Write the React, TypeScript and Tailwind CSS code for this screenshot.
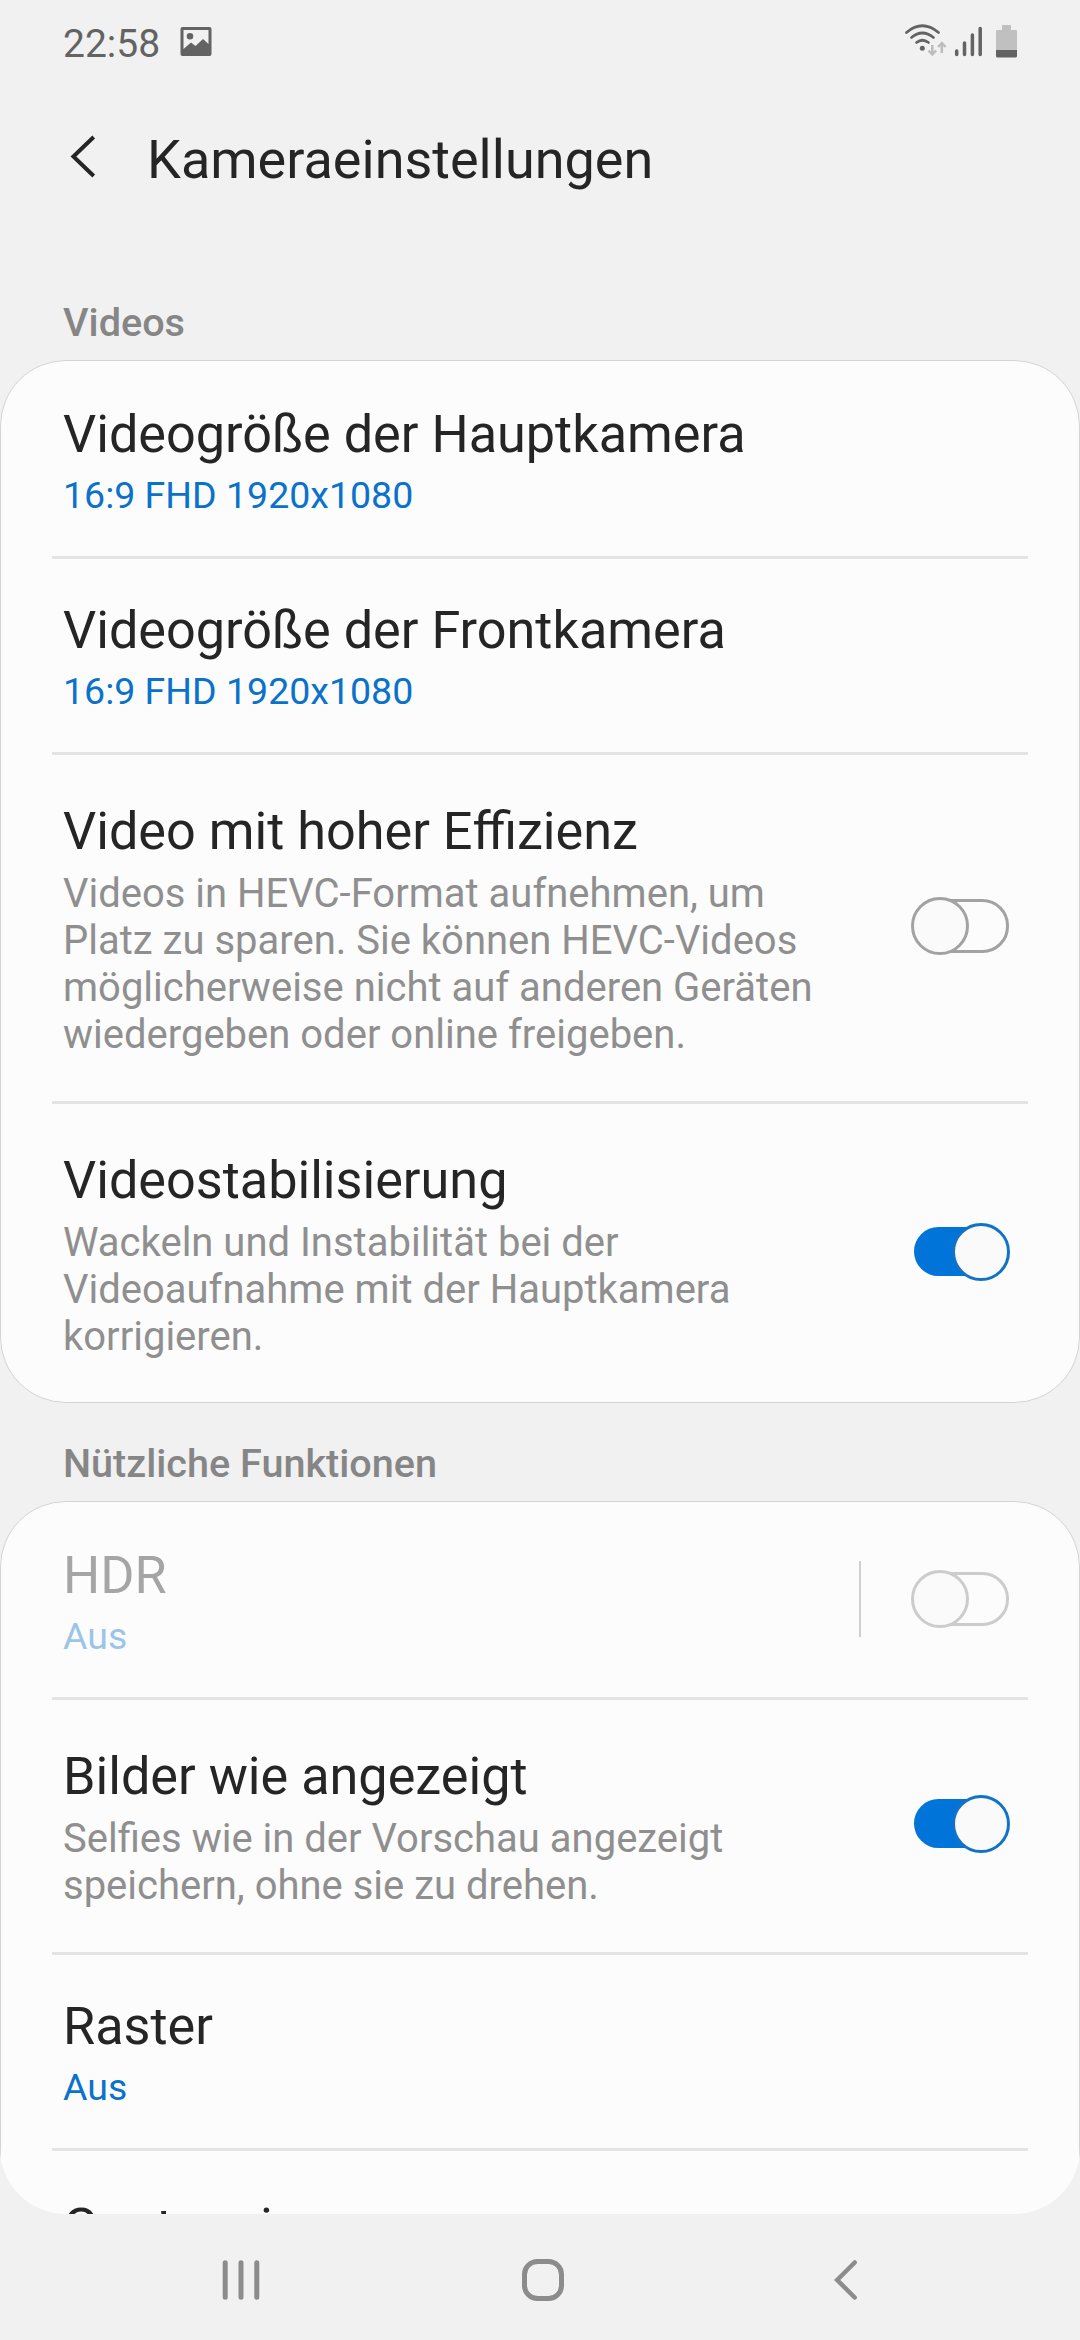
import type { ReactNode } from 'react';

function Toggle({ on = false, dim = false }: { on?: boolean; dim?: boolean }) {
  if (on) {
    return (
      <svg width="100" height="58" viewBox="0 0 100 58" className="shrink-0">
        <rect x="3" y="4" width="90" height="49" rx="24.5" fill="#0074d8" />
        <circle cx="70" cy="29" r="27.5" fill="#fafafa" stroke="#1273c6" strokeWidth="3" />
      </svg>
    );
  }
  const color = dim ? '#cccccc' : '#a2a2a2';
  return (
    <svg width="100" height="58" viewBox="0 0 100 58" className="shrink-0">
      <rect x="12" y="3.5" width="84.5" height="51" rx="25" fill="none" stroke={color} strokeWidth="3" />
      <circle cx="29" cy="29" r="27.5" fill="#fafafa" stroke={color} strokeWidth="3" />
    </svg>
  );
}

type RowProps = {
  title: string;
  value?: string;
  lines?: string[];
  height: string;
  pad: string;
  dim?: boolean;
  last?: boolean;
  controlTop?: string;
  children?: ReactNode;
};

function Row({ title, value, lines, height, pad, dim, last, controlTop = '', children }: RowProps) {
  return (
    <div className={`mx-[52px] flex shrink-0 items-start ${height} ${last ? '' : 'border-b-[3px] border-[#e4e4e4]'}`}>
      <div className={`grow pl-[11px] ${pad} ${dim ? 'opacity-40' : ''}`}>
        <div className="mb-2 h-[61px] whitespace-nowrap text-[52.2px] leading-[61px] text-[#252525]">{title}</div>
        {value && <div className="h-[44px] text-[37.5px] leading-[44px] text-[#0a72cb]">{value}</div>}
        {lines?.map((line) => (
          <div key={line} className="h-[47px] whitespace-nowrap text-[40px] leading-[47px] text-[#8f8f8f]">
            {line}
          </div>
        ))}
      </div>
      {children && <div className={`mr-[17px] flex items-center ${controlTop}`}>{children}</div>}
    </div>
  );
}

export default function App() {
  return (
    <div className="flex h-[2340px] w-[1080px] flex-col overflow-hidden bg-[#f1f1f1] font-['Roboto',sans-serif]">
      <header className="flex h-[84px] shrink-0 items-start pl-[63px] text-[#636363]">
        <span className="mt-[21px] w-[117px] text-[39px] leading-[46px]">22:58</span>
        <svg width="32" height="29" viewBox="0 0 31 29" className="mt-[27px]">
          <path
            fillRule="evenodd"
            fill="#636363"
            d="M2 0H29Q31 0 31 2V27Q31 29 29 29H2Q0 29 0 27V2Q0 0 2 0ZM3 3V22L10.500 15.500L15 19L22.500 12L28 17V3ZM9.500 6A3.300 3.300 0 1 1 9.500 12.600A3.300 3.300 0 1 1 9.500 6Z"
          />
        </svg>
        <svg width="120" height="36" viewBox="904 23 120 36" className="ml-auto mr-[56px] mt-[23px]">
          <g fill="none" stroke="#636363" strokeWidth="2.700" strokeLinecap="round">
            <path d="M906.500 32.500Q922.300 19 938.500 32.500" />
            <path d="M911.500 37.500Q922.300 28.500 933.500 37.500" />
            <path d="M916.500 42.500Q922.300 38 928.500 42.500" />
          </g>
          <circle cx="922.300" cy="48.300" r="2.500" fill="#636363" />
          <g fill="none" stroke="#bdbdbd" strokeWidth="2.500">
            <path d="M932.300 45V54.500M928.500 50.500L932.300 54.500L936.100 50.500M941.800 53V43.500M938 47L941.800 43L945.600 47" />
          </g>
          <g stroke="#636363" strokeWidth="3.500" strokeLinecap="round">
            <path d="M956.700 51V54.500M964.500 43V54.500M972.400 35V54.500M980.200 28.500V54.500" />
          </g>
          <path d="M1002 25H1011V30H1016Q1017 30 1017 31V50H996V31Q996 30 997 30H1002Z" fill="#c0c0c0" />
          <path d="M996 50H1017V56Q1017 57.500 1015.500 57.500H997.500Q996 57.500 996 56Z" fill="#636363" />
        </svg>
      </header>

      <div className="flex h-[192px] shrink-0 items-start pl-[70px] pt-[44px]">
        <svg width="26" height="44" viewBox="0 0 26 44" className="mt-[6px]">
          <path d="M23.700 3L3.400 22.500L23.700 42" fill="none" stroke="#252525" strokeWidth="4" />
        </svg>
        <h1 className="ml-[51px] text-[54px] leading-[63px] text-[#252525]">Kameraeinstellungen</h1>
      </div>

      <h2 className="h-[84px] shrink-0 pl-[63px] pt-[23px] text-[39.6px] font-medium leading-[47px] text-[#868686]">
        Videos
      </h2>

      <section className="flex shrink-0 flex-col rounded-[66px] border border-[#d4d4d4] bg-[#fcfcfc]">
        <div className="-mx-px flex flex-col">
          <Row title="Videogröße der Hauptkamera" value="16:9 FHD 1920x1080" height="h-[198px]" pad="pt-[43px]" />
          <Row title="Videogröße der Frontkamera" value="16:9 FHD 1920x1080" height="h-[196px]" pad="pt-[41px]" />
          <Row
            title="Video mit hoher Effizienz"
            lines={[
              'Videos in HEVC-Format aufnehmen, um',
              'Platz zu sparen. Sie können HEVC-Videos',
              'möglicherweise nicht auf anderen Geräten',
              'wiedergeben oder online freigeben.',
            ]}
            height="h-[349px]"
            pad="pt-[46px]"
            controlTop="mt-[142px]"
          >
            <Toggle />
          </Row>
          <Row
            title="Videostabilisierung"
            lines={['Wackeln und Instabilität bei der', 'Videoaufnahme mit der Hauptkamera', 'korrigieren.']}
            height="h-[298px]"
            pad="pt-[46px]"
            controlTop="mt-[119px]"
            last
          >
            <Toggle on />
          </Row>
        </div>
      </section>

      <h2 className="h-[98px] shrink-0 pl-[63px] pt-[37px] text-[39.6px] font-medium leading-[47px] text-[#868686]">
        Nützliche Funktionen
      </h2>

      <div className="h-[713px] shrink-0 overflow-hidden rounded-b-[66px]">
        <section className="flex h-[900px] flex-col rounded-t-[66px] border border-[#d4d4d4] bg-[#fcfcfc]">
          <div className="-mx-px flex flex-col">
            <Row title="HDR" value="Aus" height="h-[198px]" pad="pt-[43px]" controlTop="mt-[59px]" dim>
              <div className="mr-[50px] h-[76px] w-[2px] bg-[#d0d0d0]" />
              <Toggle dim />
            </Row>
            <Row
              title="Bilder wie angezeigt"
              lines={['Selfies wie in der Vorschau angezeigt', 'speichern, ohne sie zu drehen.']}
              height="h-[255px]"
              pad="pt-[46px]"
              controlTop="mt-[95px]"
            >
              <Toggle on />
            </Row>
            <Row title="Raster" value="Aus" height="h-[196px]" pad="pt-[41px]" />
            <Row title="Geotagging" height="h-[196px]" pad="pt-[46px]" last />
          </div>
        </section>
      </div>

      <nav className="flex h-[126px] shrink-0 items-start pt-[45px]">
        <svg width="38" height="40" viewBox="0 0 38 40" className="ml-[222px] mt-px">
          <path d="M3.200 2.700V37.300M19 2.700V37.300M34.800 2.700V37.300" stroke="#8c8c8c" strokeWidth="5" strokeLinecap="round" />
        </svg>
        <svg width="42" height="42" viewBox="0 0 42 42" className="ml-[262px]">
          <rect x="2.500" y="2.500" width="37" height="37" rx="13" fill="none" stroke="#8c8c8c" strokeWidth="5" />
        </svg>
        <svg width="26" height="40" viewBox="0 0 26 40" className="ml-[269px] mt-px">
          <path d="M21.700 2.500L4.200 20L21.700 37.500" fill="none" stroke="#8c8c8c" strokeWidth="4.500" strokeLinecap="round" />
        </svg>
      </nav>
    </div>
  );
}
